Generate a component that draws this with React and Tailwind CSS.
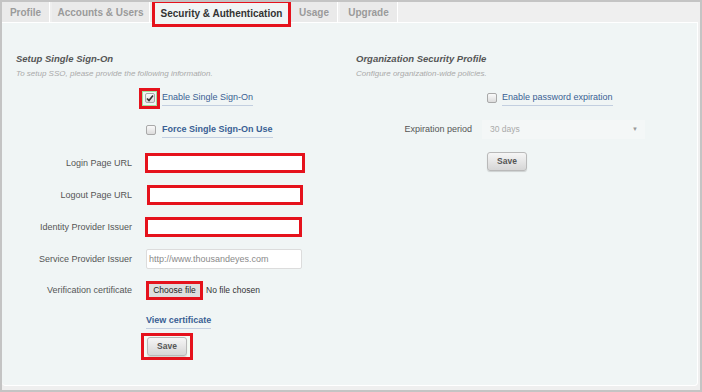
import React from "react";

const tabs = [
  { label: "Profile", w: "w-[48px]" },
  { label: "Accounts & Users", w: "w-[98px]" },
  { label: "Security & Authentication", w: "w-[139px]", active: true },
  { label: "Usage", w: "w-[47px]" },
  { label: "Upgrade", w: "w-[58px]" },
];

function Checkbox({ checked }) {
  return (
    <span className="flex h-[10px] w-[10px] items-center justify-center rounded-[2px] border border-[#a9a9a9] bg-gradient-to-b from-[#fafafa] to-[#dcdcdc]">
      {checked && (
        <svg width="8" height="8" viewBox="0 0 8 8">
          <path d="M1 4.5 L3 6.5 L7 1.5" stroke="#333" strokeWidth="1.6" fill="none" />
        </svg>
      )}
    </span>
  );
}

function Label({ children }) {
  return (
    <div className="w-[116px] shrink-0 text-right text-[9px] text-[#555]">{children}</div>
  );
}

function RedInput({ w = "w-[160px]" }) {
  return <div className={`h-[20px] ${w} border-[3px] border-[#e5121c] bg-white`} />;
}

function SaveButton() {
  return (
    <button className="h-[19px] w-[40px] rounded-[3px] border border-[#b9b9b9] bg-gradient-to-b from-[#f6f6f6] to-[#d6d6d6] text-[8.5px] font-bold text-[#555] shadow-[0_1px_1px_rgba(0,0,0,0.15)]">
      Save
    </button>
  );
}

export default function App() {
  return (
    <div className="h-[392px] w-[702px] overflow-hidden border-2 border-[#c4c4c4] bg-[#efefef] font-['Liberation_Sans',Arial,sans-serif]">
      {/* tabs */}
      <div className="flex h-[20px] items-stretch">
        {tabs.map((t) =>
          t.active ? (
            <div
              key={t.label}
              className={`${t.w} relative z-10 -mt-[2px] flex h-[27px] items-center justify-center border-[3px] border-[#e5121c] bg-[#f1f5f5] text-[10px] font-bold text-[#333]`}
            >
              {t.label}
            </div>
          ) : (
            <div
              key={t.label}
              className={`${t.w} mr-[2px] flex items-center justify-center border-r border-white bg-[#eaeaea] text-[10px] font-bold text-[#9a9a9a]`}
            >
              {t.label}
            </div>
          )
        )}
      </div>

      {/* panel */}
      <div className="mr-[2px] h-[364px] rounded-b-[4px] border-t border-r border-b border-white bg-[#f0f5f5] pt-[29px] pl-[14px]">
        <div className="flex">
          {/* left column */}
          <div className="w-[340px]">
            <div className="text-[9.5px] font-bold italic text-[#555]">Setup Single Sign-On</div>
            <div className="mt-[2px] text-[8px] italic text-[#aaa]">
              To setup SSO, please provide the following information.
            </div>

            <div className="mt-[7px] flex h-[22px] items-center">
              <div className="w-[123px]" />
              <div className="flex h-[21px] w-[21px] items-center justify-center border-[3px] border-[#e5121c]">
                <div className="flex h-[15px] w-[15px] items-center justify-center border border-[#9ee39e]">
                  <Checkbox checked />
                </div>
              </div>
              <span className="ml-[2px] border-b border-[#c3cfe0] text-[9px] text-[#3a5f94]">
                Enable Single Sign-On
              </span>
            </div>

            <div className="mt-[10px] flex h-[22px] items-center">
              <div className="w-[130px]" />
              <Checkbox />
              <span className="ml-[6px] border-b border-[#c3cfe0] text-[9px] font-semibold text-[#3a5f94]">
                Force Single Sign-On Use
              </span>
            </div>

            <div className="mt-[12px] flex h-[20px] items-center">
              <Label>Login Page URL</Label>
              <div className="ml-[13px]"><RedInput w="w-[160px]" /></div>
            </div>

            <div className="mt-[12px] flex h-[20px] items-center">
              <Label>Logout Page URL</Label>
              <div className="ml-[15px]"><RedInput w="w-[156px]" /></div>
            </div>

            <div className="mt-[12px] flex h-[20px] items-center">
              <Label>Identity Provider Issuer</Label>
              <div className="ml-[13px]"><RedInput w="w-[157px]" /></div>
            </div>

            <div className="mt-[12px] flex h-[20px] items-center">
              <Label>Service Provider Issuer</Label>
              <div className="ml-[14px] flex h-[20px] w-[156px] items-center rounded-[2px] border border-[#dcdcdc] bg-white px-[2px] text-[9px] text-[#8a8a8a]">
                http://www.thousandeyes.com
              </div>
            </div>

            <div className="mt-[11px] flex h-[20px] items-center">
              <Label>Verification certificate</Label>
              <div className="ml-[14px] flex h-[19px] w-[57px] items-center justify-center border-[3px] border-[#e5121c] bg-[#dedede] text-[8.5px] text-[#222]">
                Choose file
              </div>
              <span className="ml-[3px] text-[8.5px] text-[#333]">No file chosen</span>
            </div>

            <div className="mt-[13px] flex h-[16px] items-center">
              <div className="w-[130px]" />
              <span className="border-b border-[#c3cfe0] text-[9px] font-bold text-[#3a5f94]">
                View certificate
              </span>
            </div>

            <div className="mt-[4px] flex">
              <div className="w-[125px]" />
              <div className="flex h-[27px] w-[52px] items-center justify-center border-[3px] border-[#e5121c] bg-[#f4faf4]">
                <SaveButton />
              </div>
            </div>
          </div>

          {/* right column */}
          <div className="w-[320px]">
            <div className="text-[9.5px] font-bold italic text-[#555]">Organization Security Profile</div>
            <div className="mt-[2px] text-[8px] italic text-[#aaa]">Configure organization-wide policies.</div>

            <div className="mt-[7px] flex h-[22px] items-center">
              <div className="w-[131px]" />
              <Checkbox />
              <span className="ml-[5px] border-b border-[#c3cfe0] text-[9px] text-[#3a5f94]">
                Enable password expiration
              </span>
            </div>

            <div className="mt-[10px] flex h-[20px] items-center">
              <Label>Expiration period</Label>
              <div className="ml-[10px] flex h-[19px] w-[163px] items-center justify-between bg-[#f4f7f7] pl-[8px] pr-[7px] text-[8.5px] text-[#aaa]">
                <span>30 days</span>
                <span className="text-[6px] text-[#999]">▼</span>
              </div>
            </div>

            <div className="mt-[13px] flex">
              <div className="w-[131px]" />
              <SaveButton />
            </div>
          </div>
        </div>
      </div>
    </div>
  );
}
